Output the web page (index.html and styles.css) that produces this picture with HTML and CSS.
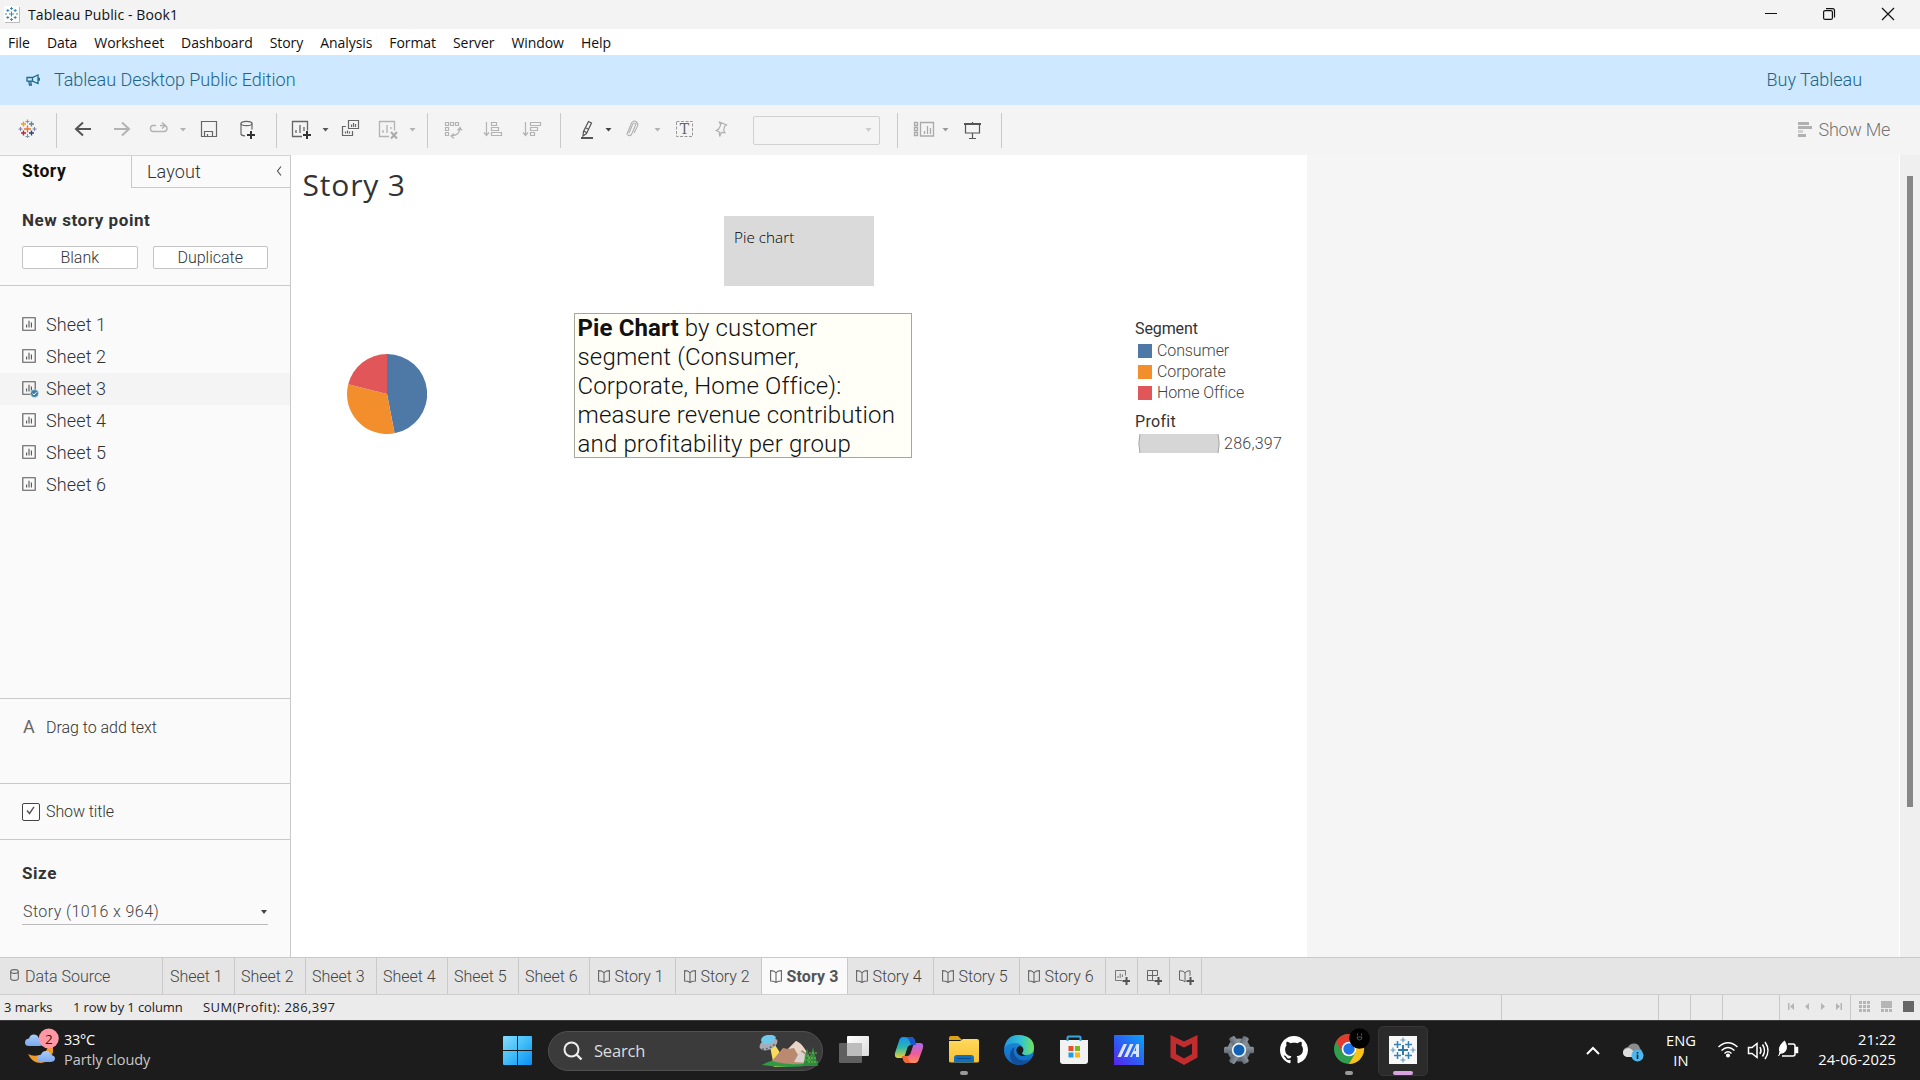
FILE: index.html
```html
<!DOCTYPE html>
<html lang="en">
<head>
<meta charset="utf-8">
<title>Tableau Public - Book1</title>
<link rel="stylesheet" href="styles.css">
</head>
<body>
<svg class="defs" aria-hidden="true">
  <defs>
    <symbol id="sheet" viewBox="0 0 14 14"><path d="M.8.8h12.4v12.4H.8z" fill="none" stroke="#555" stroke-width="1.1"/><path d="M4.6 10.6V7.4M7 10.6V3.8M9.4 10.6V5.4" stroke="#555" fill="none" stroke-width="1.1"/></symbol>
    <symbol id="book" viewBox="0 0 12 13"><path d="M.6.6 3.6 1 6 2.600 8.400 1 11.400.6V11l-3 .2L6 12.500 3.600 11.200.6 11zM6 2.600v9.900" fill="none" stroke="#666" stroke-width="1.1"/></symbol>
    <symbol id="caret" viewBox="0 0 6 4"><path d="M0 0h6L3 4z" fill="currentColor"/></symbol>
    <linearGradient id="win" x1="0" y1="0" x2="1" y2="1"><stop offset="0" stop-color="#86dcff"/><stop offset=".5" stop-color="#40bdf8"/><stop offset="1" stop-color="#0a8ef5"/></linearGradient>
    <linearGradient id="glass" x1="0" y1="0" x2="1" y2="1"><stop offset="0" stop-color="#fff"/><stop offset="1" stop-color="#dcdcdc"/></linearGradient>
    <linearGradient id="copA" x1="0" y1="0" x2="0" y2="1"><stop offset="0" stop-color="#1793ee"/><stop offset=".5" stop-color="#2db7b0"/><stop offset="1" stop-color="#e9d22c"/></linearGradient>
    <linearGradient id="copB" x1="0" y1="0" x2="0" y2="1"><stop offset="0" stop-color="#a96bf0"/><stop offset=".55" stop-color="#ef5d9a"/><stop offset="1" stop-color="#fd9052"/></linearGradient>
    <linearGradient id="folder" x1="0" y1="0" x2="0" y2="1"><stop offset="0" stop-color="#ffd95e"/><stop offset="1" stop-color="#f9bf2f"/></linearGradient>
    <linearGradient id="edgeA" x1="0" y1="0" x2="1" y2="0"><stop offset="0" stop-color="#2196df"/><stop offset=".55" stop-color="#32c3d4"/><stop offset="1" stop-color="#72e35b"/></linearGradient>
    <linearGradient id="edgeB" x1="0" y1="0" x2="0" y2="1"><stop offset="0" stop-color="#1b8fe0"/><stop offset="1" stop-color="#1168c0"/></linearGradient>
    <linearGradient id="asus" x1="0" y1="1" x2="1" y2="0"><stop offset="0" stop-color="#5a22ee"/><stop offset=".5" stop-color="#2b62f4"/><stop offset="1" stop-color="#0aa4f8"/></linearGradient>
    <linearGradient id="gear" x1="0" y1="0" x2="0" y2="1"><stop offset="0" stop-color="#8b949c"/><stop offset="1" stop-color="#626c75"/></linearGradient>
    <linearGradient id="cloud" x1="0" y1="0" x2="0" y2="1"><stop offset="0" stop-color="#a9cdfb"/><stop offset="1" stop-color="#7ba8ee"/></linearGradient>
  </defs>
</svg>

<header class="titlebar">
  <svg class="appicon" width="16" height="17" viewBox="0 0 16 17"><path d="M0 0h15v16H0z" fill="#fdfdfd"/><path d="M15.500 1v15.500H1" stroke="#bbb" fill="none"/><path d="M7.500 5.500v5M5 8h5M7.500 1v3M6 2.500h3M7.500 12v3M6 13.500h3M3.800 3v3M2.300 4.500h3M11.200 3v3M9.700 4.500h3M3.800 10v3M2.300 11.500h3M11.200 10v3M9.700 11.500h3M1 8h2M12 8h2" stroke="#4388b4" fill="none"/></svg>
  <span>Tableau Public - Book1</span>
  <svg class="winctl" width="160" height="29" viewBox="1760 0 160 29" fill="none" stroke="#111" stroke-width="1.2"><path d="M1765 13.500h12M1882 8l12 12M1894 8l-12 12"/><rect x="1823.600" y="10.600" width="8.800" height="8.800" rx="1.500"/><path d="M1826 8.600h6.500q2 0 2 2v6.800"/></svg>
</header>

<nav class="menubar"><span>File</span><span>Data</span><span>Worksheet</span><span>Dashboard</span><span>Story</span><span>Analysis</span><span>Format</span><span>Server</span><span>Window</span><span>Help</span></nav>

<div class="banner">
  <svg width="14" height="14" viewBox="0 0 14 14" fill="none" stroke="#1f6a8c" stroke-width="1.300"><path d="M1 4.500h5.500L12 2v8.500L6.500 8.200H1zM6.500 4.500v3.700M2.800 8.200l.7 3.800h1.800l-.6-3.800M13.300 4.800v3"/></svg>
  <span>Tableau Desktop Public Edition</span>
  <a class="buy">Buy Tableau</a>
</div>

<div class="toolbar">
  <div class="group"><svg width="56" height="50" viewBox="0 105 56 50" fill="none" stroke-width="1.400"><path d="M27.500 125.500v7M24 129h7" stroke="#e8762c"/><path d="M27.500 119.500v4M25.500 121.500h4M27.500 134v4M25.500 136.500h4" stroke="#7d94aa" stroke-width="1.100"/><path d="M23.500 121.500v5M21 124h5" stroke="#eb9a3c"/><path d="M31.500 121.500v5M29 124h5" stroke="#59879b"/><path d="M23.500 130.500v5M21 133h5" stroke="#b5283b"/><path d="M31.500 130.500v5M29 133h5" stroke="#28477c"/><path d="M20.500 127v4M18.500 129h4M34.500 127v4M32.500 129h4" stroke="#7c80a8" stroke-width="1.100"/></svg></div>
  <div class="group"><svg width="219" height="50" viewBox="57 105 219 50" fill="none"><path d="M91 129H76M83 122.500 76 129l7 6.500" stroke="#555" stroke-width="2"/><path d="M114 129h15M122 122.500l7 6.500-7 6.500" stroke="#b3b3b3" stroke-width="2"/><path d="M156 125.500h-3q-2.500 0-2.500 3t2.500 3h11q3 0 3-3t-3-3h-4M162 122.500l3.500 3-3.500 3" stroke="#b3b3b3" stroke-width="1.400"/><path d="M180 128h6l-3 3.500z" fill="#b3b3b3"/><path d="M201.500 121.500h15v15h-15zM204.500 136v-4.500h8v4.500M207.500 136v-2" stroke="#666" stroke-width="1.200"/><ellipse cx="246.500" cy="123.500" rx="5.500" ry="2.200" stroke="#666" stroke-width="1.200"/><path d="M241 123.500V134q.5 1.700 4 1.900M252 123.500v6" stroke="#666" stroke-width="1.200"/><path d="M251 131v8M247 135h8" stroke="#333" stroke-width="2"/></svg></div>
  <div class="group"><svg width="150" height="50" viewBox="277 105 150 50" fill="none"><path d="M302 136.500h-9.500v-15h15v9M296 133v-3M300 133v-8M304 131v-4" stroke="#666" stroke-width="1.300"/><path d="M307 131v8M303 135h8" stroke="#333" stroke-width="2"/><path d="M322.500 128h6l-3 3.500z" fill="#555"/><path d="M348.500 120.500h10v8h-10zM346 126.500h-3.500v9h10v-4.500M351.500 127v-2.500M353.500 127v-4M355.500 127v-3M345.500 133.500v-2M347.500 133.500v-3M349.500 133.500v-2" stroke="#666" stroke-width="1.200"/><path d="M389 136.500h-9.500v-15h15v9M383 133v-3M387 133v-8M391 129v-2" stroke="#b3b3b3" stroke-width="1.300"/><path d="M391 132l6 6.500M397 132l-6 6.500" stroke="#aaa" stroke-width="2"/><path d="M409.500 128h6l-3 3.500z" fill="#b3b3b3"/></svg></div>
  <div class="group"><svg width="132" height="50" viewBox="428 105 132 50" fill="none" stroke="#b3b3b3" stroke-width="1.200"><path d="M445.500 122.500h3v3h-3zM450.500 122.500h3v3h-3zM455.500 122.500h3v3h-3zM445.500 127.500h3v3h-3zM445.500 132.500h3v3h-3zM460 128q0 7-8.500 8M457.500 130.500 460 127.500l2 3M454 133.500l-3 2.500 3 2.500"/><path d="M486.500 122v13M484 132.500l2.500 3 2.500-3M491.500 122.500h5v3h-5zM491.500 127.500h7v3h-7zM491.500 132.500h10v3h-10z"/><path d="M525.500 122v13M523 132.500l2.500 3 2.500-3M530.500 122.500h10v3h-10zM530.500 127.500h7v3h-7zM530.500 132.500h4v3h-4z"/></svg></div>
  <div class="group"><svg width="192" height="50" viewBox="561 105 192 50" fill="none"><path d="M588.500 121.500l3 1.500-5 10.500-3.500 2.500.5-4.500zM584 131l3 2M586 128l3 1.500" stroke="#555" stroke-width="1.200"/><path d="M581 138h12" stroke="#555" stroke-width="2"/><path d="M605.500 128h6l-3 3.500z" fill="#444"/><path d="M629 133l3.800-9q1.700-2 3.200 0l-4.500 10.500q-2.500 2.500-4.500-.5l4.500-11q2.500-3.500 5-1t.5 5l-3 6" stroke="#b0b0b0" stroke-width="1.100"/><path d="M654.500 128h6l-3 3.500z" fill="#b3b3b3"/><rect x="676.500" y="121.500" width="16" height="15" stroke="#999" stroke-dasharray="3 1.500"/><text x="684.500" y="134" text-anchor="middle" class="tee">T</text><path d="M719.500 122l7 3-2 1.500-.8 4 1.200 2.300-3.700-.3-1.500 4-.5-4.500-3-1.500 2.500-1.500 2-4z" stroke="#b0b0b0" stroke-width="1.200"/></svg><div class="select"><svg width="7" height="4"><use href="#caret"/></svg></div></div>
  <div class="group"><svg width="103" height="50" viewBox="898 105 103 50" fill="none"><path d="M914.500 122.500h3v3h-3zM914.500 127.500h3v3h-3zM914.500 132.500h3v3h-3zM920.500 122.500h13v13.500h-13zM924.500 134v-3M927.500 134v-8M930.500 134v-6" stroke="#aaa" stroke-width="1.300"/><path d="M942.500 128h6l-3 3.500z" fill="#999"/><path d="M964 124h17" stroke="#555" stroke-width="2"/><path d="M965.500 124.500v8.500h14v-8.500M972.500 133v6M969 138.500h7M972.500 122v2" stroke="#555" stroke-width="1.200"/></svg></div>
  <div class="showme"><svg width="14" height="15" fill="#b0b0b0"><path d="M0 0h11v3H0zM0 4h14v3H0zM0 12h8v3H0z"/><path d="M0 8h5v3H0z" fill="#d2d2d2"/></svg><span>Show Me</span></div>
</div>

<main class="workspace">
  <aside class="sidebar">
    <div class="sidetabs"><div class="on">Story</div><div class="off">Layout<svg width="6" height="10" viewBox="0 0 6 10"><path d="M5 .5 1.500 5 5 9.500" fill="none" stroke="#555" stroke-width="1.200"/></svg></div></div>
    <section class="newpoint"><h2>New story point</h2><div class="btns"><button>Blank</button><button>Duplicate</button></div></section>
    <ul class="sheets">
      <li><svg width="14" height="14"><use href="#sheet"/></svg>Sheet 1</li>
      <li><svg width="14" height="14"><use href="#sheet"/></svg>Sheet 2</li>
      <li class="used"><svg width="14" height="14"><use href="#sheet"/><circle cx="12.500" cy="12.500" r="4" fill="#3d7ea6" stroke="#f4f4f4" stroke-width=".6"/><path d="M10.500 12.500l1.500 1.500 2.500-2.800" stroke="#fff" fill="none"/></svg>Sheet 3</li>
      <li><svg width="14" height="14"><use href="#sheet"/></svg>Sheet 4</li>
      <li><svg width="14" height="14"><use href="#sheet"/></svg>Sheet 5</li>
      <li><svg width="14" height="14"><use href="#sheet"/></svg>Sheet 6</li>
    </ul>
    <section class="dragtext"><b>A</b><span>Drag to add text</span></section>
    <section class="showtitle"><i class="check"><svg width="9" height="9" viewBox="0 0 9 9"><path d="M1 4.500 3.500 7.500 8 .8" fill="none" stroke="#555" stroke-width="1.400"/></svg></i><span>Show title</span></section>
    <section class="size"><h2>Size</h2><div class="sizesel"><span>Story (1016 x 964)</span><svg width="6" height="4"><use href="#caret"/></svg></div></section>
  </aside>

  <div class="canvas">
    <h1>Story 3</h1>
    <div class="point">Pie chart</div>
    <div class="viz">
      <svg class="pie" width="80" height="80" viewBox="-40 -40 80 80"><path d="M0 0V-40A40 40 0 0 1 7.600 39.300Z" fill="#4e79a7"/><path d="M0 0 7.600 39.300A40 40 0 0 1 -38.800 -9.700Z" fill="#f28e2b"/><path d="M0 0 -38.800 -9.700A40 40 0 0 1 0 -40Z" fill="#e15759"/></svg>
      <p class="note"><b>Pie Chart</b> by customer<br>segment (Consumer,<br>Corporate, Home Office):<br>measure revenue contribution<br>and profitability per group</p>
      <div class="legend">
        <h3>Segment</h3>
        <div class="key"><i class="blue"></i>Consumer</div>
        <div class="key"><i class="orange"></i>Corporate</div>
        <div class="key"><i class="red"></i>Home Office</div>
        <h3 class="profit">Profit</h3>
        <div class="sizekey"><svg width="82" height="19" viewBox="0 0 82 19"><path d="M2 0h78q2 9.500 0 19H2q-2-9.500 0-19z" fill="#d6d6d6"/><path d="M2 0q-2.400 9.500 0 19M80 0q2.400 9.500 0 19" fill="none" stroke="#a4a4a4"/></svg><span>286,397</span></div>
      </div>
    </div>
  </div>
  <div class="scroll"><div class="thumb"></div></div>
</main>

<div class="tabs">
  <div class="tab source"><svg width="9" height="12" viewBox="0 0 9 12" fill="none" stroke="#666" stroke-width="1.100"><ellipse cx="4.500" cy="2.500" rx="3.800" ry="1.900"/><path d="M.7 2.500v7q0 1.900 3.800 1.900t3.800-1.900v-7"/></svg><span>Data Source</span></div>
  <div class="tab first">Sheet 1</div><div class="tab">Sheet 2</div><div class="tab">Sheet 3</div><div class="tab">Sheet 4</div><div class="tab">Sheet 5</div><div class="tab">Sheet 6</div>
  <div class="tab story"><svg width="12" height="13"><use href="#book"/></svg>Story 1</div>
  <div class="tab story"><svg width="12" height="13"><use href="#book"/></svg>Story 2</div>
  <div class="tab story current"><svg width="12" height="13"><use href="#book"/></svg>Story 3</div>
  <div class="tab story"><svg width="12" height="13"><use href="#book"/></svg>Story 4</div>
  <div class="tab story"><svg width="12" height="13"><use href="#book"/></svg>Story 5</div>
  <div class="tab story"><svg width="12" height="13"><use href="#book"/></svg>Story 6</div>
  <div class="tab add"><svg width="15" height="15" viewBox="0 0 15 15" fill="none"><path d="M7 10.500H.5V.5h10v5M3 8V6M5.200 8V3.500M7.400 7V4.500" stroke="#777"/><path d="M11.500 7v8M7.500 11h8" stroke="#555" stroke-width="2"/></svg></div>
  <div class="tab add"><svg width="15" height="15" viewBox="0 0 15 15" fill="none"><path d="M7 10.500H.5V.5h10v5M.5 5.500h10M5.500.5v10" stroke="#666"/><path d="M11.500 7v8M7.500 11h8" stroke="#555" stroke-width="2"/></svg></div>
  <div class="tab add"><svg width="15" height="15" viewBox="0 0 15 15" fill="none"><path d="M6 12 4 10.500.5 10V.8l3.500.4L6 2.800 8 1.200 11 .8v5M6 2.800V12" stroke="#666"/><path d="M11.500 7v8M7.500 11h8" stroke="#555" stroke-width="2"/></svg></div>
</div>

<div class="status">
  <span class="marks">3 marks</span><span class="rows">1 row by 1 column</span><span class="sum">SUM(Profit): 286,397</span>
  <svg width="419" height="25" viewBox="1501 995 419 25"><path d="M1501.500 995v25M1658.500 995v25M1690.500 995v25M1722.500 995v25M1779.500 995v25M1850.500 995v25" stroke="#c9c9c9"/><g fill="#b5b5b5"><path d="M1788 1003h1.500v7H1788zM1794 1003v7l-4-3.500zM1809 1003v7l-4-3.500zM1821 1003v7l4-3.500zM1836 1003v7l4-3.500zM1840.500 1003h1.500v7h-1.500z"/><path d="M1859 1001h3v3h-3zM1863 1001h3v3h-3zM1867 1001h3v3h-3zM1859 1005h3v3h-3zM1863 1005h3v3h-3zM1867 1005h3v3h-3zM1859 1009h3v3h-3zM1863 1009h3v3h-3zM1867 1009h3v3h-3zM1881 1001h11v7h-11zM1881 1009h3v3h-3zM1885 1009h3v3h-3zM1889 1009h3v3h-3z"/></g><path d="M1903 1001h11v11h-11z" fill="#666"/></svg>
</div>

<footer class="taskbar">
  <div class="weather">
    <svg width="36" height="36" viewBox="24 1027 36 36"><path d="M28 1053q5 3 12 1 8-3 9-12 5 3 4 9-2 10-12 11-9 0-13-9z" fill="#f09a25"/><path d="M29 1045q-4 0-4-3.500t4-4q1-4 5-4 3.500 0 5 4 4 .5 4 4t-4 3.500z" fill="url(#cloud)"/><path d="M41 1061q-4 0-4-3.500t4-3.500q1-4 5-4t5 4q4 .5 4 3.500t-4 3.500z" fill="url(#cloud)"/><circle cx="48.800" cy="1037.500" r="10" fill="#ff98a3"/><text x="48.800" y="1042.500" text-anchor="middle" class="badge">2</text></svg>
    <div class="wtext"><div class="temp">33°C</div><div class="cond">Partly cloudy</div></div>
  </div>
  <div class="apps">
    <svg class="start" width="29" height="29" viewBox="0 0 29 29" fill="url(#win)"><path d="M0 1q0-1 1-1h13v14H0zM15 0h13q1 0 1 1v13H15zM0 15h14v14H1q-1 0-1-1zM15 15h14v13q0 1-1 1H15z"/></svg>
    <div class="search">
      <svg width="20" height="20" viewBox="0 0 20 20" fill="none" stroke="#eee"><circle cx="8.500" cy="8.500" r="7" stroke-width="2"/><path d="M13.500 13.500l5 5" stroke-width="2.400"/></svg><span>Search</span>
      <svg class="ufo" width="60" height="32" viewBox="758 1035 60 32"><path d="M770 1046l4 21h12l-7-16-4-6z" fill="#f5dc5f"/><path d="M762 1065q12-8 32-4 12-3 18 4-24 4-50 0z" fill="#2f9b45"/><path d="M772 1061l11-13 5 1 8-8q5 2 8 7l9 14q-18 5-41-1z" fill="#b98970"/><path d="M788 1049l8-8q5 2 8 7l5 7-7-5-4 5-4-7z" fill="#e9d6cb"/><path d="M794 1062l6-11 6 4 3 8z" fill="#d8d2d2"/><path d="M807 1048l-4 18h8zM813 1047l-5 19h10z" fill="#2f8b3d"/><path d="M804 1056h7M804 1060h7M809 1053h8M808 1058h9M808 1062h10" stroke="#77bd4f" stroke-dasharray="2 1"/><ellipse cx="768.500" cy="1044" rx="9.500" ry="5.500" transform="rotate(-25 768.500 1044)" fill="#a9abb5"/><path d="M761 1041q0-5 6-6t9 2l-3 5q-6 3-9 2z" fill="#6ec9ea"/><path d="M762 1049q7 1 14-6" fill="none" stroke="#62636e" stroke-width="1.500" stroke-dasharray="2 2"/></svg>
    </div>
    <div class="app"><svg width="32" height="30" viewBox="0 0 32 30"><rect x="9" y="1" width="22" height="20" rx="1" fill="url(#glass)"/><rect x="1" y="8" width="23" height="20" rx="1" fill="#777" fill-opacity=".75"/><path d="M9 8h15v13H9z" fill="#bdbdbd"/></svg></div>
    <div class="app"><svg width="30" height="30" viewBox="0 0 30 30"><path d="M9 2h8q3 0 4 4l1 4h-5q-3 0-4 4l-2 6q-1 3-4 3H4q-4 0-3-5L5 6q1-4 4-4z" fill="url(#copA)"/><path d="M21 28h-8q-3 0-4-4l-1-3h5q3 0 4-4l2-6q1-3 4-3h3q4 0 3 5l-4 11q-1 4-4 4z" fill="url(#copB)"/><path d="M9 2h8q3 0 4 4l1 4h-5l-2-5q-1-3-6-3z" fill="#1d56c9"/><path d="M13 28q-3 0-4-4l-1-3h5l2 5q1 2 6 2z" fill="#f1672d"/></svg></div>
    <div class="app run"><svg width="30" height="30" viewBox="0 0 30 30"><path d="M0 3q0-2 2-2h7l4 4H0z" fill="#dca117"/><path d="M0 6h11l3-2h14q2 0 2 2v20q0 1.500-2 1.500H2Q0 27.500 0 26z" fill="url(#folder)"/><path d="M5 27.500V23q0-3 3-3h14q3 0 3 3v4.500z" fill="#1170bd"/><path d="M8 23.500h14" stroke="#0b4a89"/></svg></div>
    <div class="app"><svg width="30" height="30" viewBox="0 0 30 30"><circle cx="15" cy="15" r="15" fill="url(#edgeB)"/><path d="M.5 13Q2 0 15 0q15 1 15 13 0 7-8 7-4 0-4-2 2-2 1-5-2-5-8-5-7 0-10.500 5z" fill="url(#edgeA)"/><path d="M11 12q-3 5 1 10 5 6 15 2-4 6-12 6-9-1-9-9 0-7 5-9z" fill="#124f9b"/><path d="M19 13q1 3-1 5 0 2 4 2-3 2-7 0-4-3-2-7 3-4 6 0z" fill="#1b1b1b"/></svg></div>
    <div class="app"><svg width="30" height="30" viewBox="0 0 30 30"><path d="M1 5h28v21q0 3-3 3H4q-3 0-3-3z" fill="#f2f2f2"/><path d="M8.500 6V2.500q0-1 1-1h11q1 0 1 1V6" fill="none" stroke="#35a7dc" stroke-width="2"/><path d="M9.500 11h5v5h-5z" fill="#e8502a"/><path d="M16 11h5v5h-5z" fill="#7eb71a"/><path d="M9.500 17.500h5v5h-5z" fill="#1ba0e8"/><path d="M16 17.500h5v5h-5z" fill="#fbb516"/></svg></div>
    <div class="app"><svg width="30" height="30" viewBox="0 0 30 30"><path d="M0 0h30v30H0z" fill="url(#asus)"/><path d="M3.500 22 9.500 9H13L7 22zM10 22l6-13h3.500l-6 13zM16 22l6.500-13H25v13h-3v-3h-3l-1 3zM20.500 16H22v-4z" fill="#d7e6ff"/></svg></div>
    <div class="app"><svg width="28" height="30" viewBox="0 0 28 30"><path d="M.5 0 14 6.500 27.500 0v22.500L14 30 .5 22.500z" fill="#c22c2f"/><path d="M6 8.500l8 4 8-4v10.500l-8 4.500-8-4.500z" fill="#1c1c1c"/></svg></div>
    <div class="app"><svg width="30" height="30" viewBox="0 0 30 30"><g fill="url(#gear)"><circle cx="15" cy="15" r="11.500"/><rect x="0" y="11.800" width="30" height="6.400" rx="1.500"/><rect x="0" y="11.800" width="30" height="6.400" rx="1.500" transform="rotate(60 15 15)"/><rect x="0" y="11.800" width="30" height="6.400" rx="1.500" transform="rotate(120 15 15)"/></g><circle cx="15" cy="15" r="7.200" fill="#edf2f6"/><circle cx="15" cy="15" r="5.500" fill="#0e62b4"/></svg></div>
    <div class="app"><svg width="28" height="28" viewBox="0 0 16 16" fill="#fff"><path d="M8 0C3.580 0 0 3.580 0 8c0 3.540 2.290 6.530 5.470 7.590.4.070.55-.17.55-.38 0-.19-.01-.82-.01-1.490-2.010.37-2.530-.49-2.690-.94-.09-.23-.48-.94-.82-1.130-.28-.15-.68-.52-.01-.53.63-.01 1.080.58 1.230.82.72 1.210 1.870.87 2.330.66.07-.52.28-.87.51-1.070-1.780-.2-3.640-.89-3.640-3.950 0-.87.31-1.590.82-2.150-.08-.2-.36-1.020.08-2.120 0 0 .67-.21 2.200.82.64-.18 1.320-.27 2-.27s1.360.09 2 .27c1.530-1.040 2.200-.82 2.200-.82.44 1.100.16 1.920.08 2.120.51.56.82 1.270.82 2.150 0 3.070-1.870 3.750-3.650 3.950.29.25.54.73.54 1.480 0 1.070-.01 1.930-.01 2.200 0 .21.15.46.55.38A8.010 8.010 0 0 0 16 8c0-4.420-3.580-8-8-8z"/></svg></div>
    <div class="app run"><svg class="chrome" width="38" height="38" viewBox="-15 -21 38 38"><circle r="15" fill="#2f9e4f"/><path d="M-13 -7.500A15 15 0 0 1 13 -7.500H0L-6.500 3.700z" fill="#e33b2e"/><path d="M0 -7.500H13A15 15 0 0 1 0 15L6.500 3.700z" fill="#fbc116"/><circle r="7.300" fill="#fff"/><circle r="5.700" fill="#1f73e8"/><circle cx="10.500" cy="-10.500" r="10.300" fill="#000"/><path d="M8.500-15.500v2M12.500-15.500v2M8-12q0 3 2.500 3t2.500-3z" stroke="#555" fill="none"/></svg></div>
    <div class="app active"><svg width="28" height="28" viewBox="0 0 28 28"><path d="M0 0h28v28H0z" fill="#f8f8f8"/><path d="M14 9v10M9 14h10" stroke="#2d78ac" stroke-width="2"/><path d="M8.500 5v7M5 8.500h7M19.500 5v7M16 8.500h7M8.500 16v7M5 19.500h7M19.500 16v7M16 19.500h7" stroke="#3783b5" stroke-width="1.500"/><path d="M14 1.500v5M11.500 4h5M14 21.500v5M11.500 24h5M4 11.500v5M1.500 14h5M24 11.500v5M21.500 14h5" stroke="#5d9bc4" stroke-width="1.100"/></svg></div>
  </div>
  <div class="tray">
    <svg width="64" height="40" viewBox="1584 1030 64 40"><path d="M1587 1053l6-6 6 6" fill="none" stroke="#fff" stroke-width="2"/><path d="M1627 1056q-4-1-4-5t5-5q2-4 7-3.500 4 .5 5 5 2 1 2 4t-4 4.500z" fill="#8c8c8c"/><path d="M1627 1056q-4-1-4-4.500t5-4.500q3 0 6 4l4 5z" fill="#ddd"/><circle cx="1637.500" cy="1054.500" r="6" fill="#4cb8f0"/><path d="M1637.500 1051v1.500M1637.500 1053.500v4.500" stroke="#123" stroke-width="1.600"/></svg>
    <div class="lang">ENG<br>IN</div>
    <svg width="84" height="40" viewBox="1716 1031 84 40" fill="none" stroke="#fff" stroke-width="1.500"><path d="M1718.500 1047q9.500-8.500 19 0M1721.500 1050.500q6.500-6 13 0M1724.500 1053.500q3.500-3.500 7 0"/><circle cx="1728" cy="1055.500" r="1.300" fill="#fff"/><path d="M1748.500 1047.500h3.500l5-4v14l-5-4h-3.500zM1760 1047q2 3.500 0 7M1762.500 1044.500q4 6 0 12M1765 1042q6 8.500 0 17"/><path d="M1788 1044h5q2 0 2 2v8q0 2-2 2h-11"/><path d="M1795.500 1047.500h2v5h-2z" fill="#fff"/><path d="M1779.500 1051q-1-5 5-10 4 7 0 11-2 1.500-4 1l-2 3" fill="#fff" stroke-width="1"/></svg>
    <div class="clock">21:22<br>24-06-2025</div>
  </div>
</footer>
</body>
</html>
```
FILE: styles.css
```css
* { box-sizing: border-box; margin: 0; padding: 0; }
body {
  width: 1920px; height: 1080px; overflow: hidden;
  display: flex; flex-direction: column;
  font-family: Roboto, "Liberation Sans", sans-serif;
  font-weight: 300; font-size: 16px; color: #333; background: #f5f5f5;
}
svg { display: block; flex: none; }
.defs { width: 0; height: 0; position: absolute; }

.titlebar {
  height: 29px; background: #f3f3f3; display: flex; align-items: center;
  padding-left: 4px; gap: 8px; color: #111;
  font: 400 14px "Open Sans", sans-serif; letter-spacing: .1px;
}
.winctl { margin-left: auto; }
.menubar {
  height: 26px; background: #fff; display: flex; align-items: center;
  padding: 1px 8px 0; gap: 17px; color: #111;
  font: 400 14px "Open Sans", sans-serif; letter-spacing: -.07px;
}
.banner {
  height: 50px; background: #cde8ff; display: flex; align-items: center;
  padding: 0 58px 0 26px; gap: 14px; color: #1c6586; font-size: 18px; letter-spacing: -.03px;
}
.banner span, .banner a { margin-top: -2px; }
.banner .buy { margin-left: auto; }

.toolbar { height: 50px; background: #f4f4f4; display: flex; }
.group { display: flex; align-items: center; }
.group::after { content: ""; width: 1px; height: 35px; background: #c9c9c9; }
.tee { font: 400 14px "DejaVu Serif", serif; fill: #666; }
.select {
  width: 127px; height: 29px; margin-right: 17px; border: 1px solid #d0d0d0; border-radius: 2px;
  display: flex; align-items: center; justify-content: flex-end; padding-right: 7px; color: #ccc;
}
.showme {
  margin-left: auto; padding: 0 30px 2px 0; display: flex; align-items: center;
  gap: 7px; font-size: 18px; color: #757575; letter-spacing: -.3px;
}

.workspace { height: 802px; display: flex; }
.sidebar {
  width: 291px; background: #fafafa; border-right: 1px solid #c9c9c9; border-top: 1px solid #d4d4d4;
  display: flex; flex-direction: column;
}
.sidetabs { display: flex; height: 32px; font-size: 18px; }
.sidetabs .on { width: 131px; padding: 4px 0 0 22px; font-weight: 700; font-size: 17.500px; line-height: 22px; color: #111; letter-spacing: .5px; }
.sidetabs .off {
  flex: 1; display: flex; align-items: center; justify-content: space-between; letter-spacing: .1px;
  padding: 0 8px 1px 15px; border-left: 1px solid #c9c9c9; border-bottom: 1px solid #c9c9c9;
}
.sidebar h2 { font-size: 17px; line-height: 22px; font-weight: 700; color: #333; letter-spacing: .57px; }
.newpoint { height: 98px; padding: 21px 22px 0; border-bottom: 1px solid #c9c9c9; }
.btns { display: flex; gap: 15px; margin-top: 15px; }
.btns button {
  flex: 1; height: 23px; background: #fff; border: 1px solid #c4c4c4; border-radius: 2px;
  font: 300 16px Roboto, sans-serif; color: #333; line-height: 21px;
}
.sheets { list-style: none; padding-top: 23px; height: 412px; }
.sheets li { height: 32px; display: flex; align-items: center; gap: 10px; padding: 0 0 2px 22px; font-size: 18px; letter-spacing: .12px; }
.sheets li svg { overflow: visible; }
.sheets .used { background: #f4f4f4; }
.dragtext { border-top: 1px solid #c9c9c9; height: 85px; display: flex; padding: 19px 0 0 23px; line-height: 20px; gap: 12px; letter-spacing: -.03px; }
.dragtext b { font-size: 18px; font-weight: 400; color: #666; width: 11px; line-height: 18px; }
.showtitle { border-top: 1px solid #c9c9c9; height: 56px; display: flex; align-items: center; padding-left: 22px; gap: 6px; letter-spacing: -.1px; }
.check { width: 18px; height: 18px; border: 1px solid #444; border-radius: 2px; background: #fff; display: flex; align-items: center; justify-content: center; padding: 0 2px 2px 0; }
.size { border-top: 1px solid #c9c9c9; flex: 1; padding: 22px 22px 0; }
.sizesel { margin-top: 15px; height: 26px; border-bottom: 1px solid #bbb; display: flex; align-items: center; justify-content: space-between; padding: 0 1px; letter-spacing: .42px; color: #444; }

.canvas { width: 1016px; background: #fff; }
.canvas h1 { font: 400 30px/40px "Open Sans", sans-serif; color: #333; padding: 10px 0 0 11.500px; letter-spacing: .85px; }
.point {
  width: 150px; height: 70px; margin: 11px auto 0; background: #dadada; color: #000;
  font: 300 15.300px/22px "Open Sans", sans-serif; padding: 10px 10px;
}
.viz { display: flex; padding: 27px 0 0 56px; }
.pie { margin-top: 41px; }
.note {
  width: 338px; height: 145px; margin-left: 147px; border: 1px solid #a9a69c; background: #fffff8;
  padding: 0 2.500px; font-size: 24px; line-height: 28.900px; color: #111; letter-spacing: .16px; white-space: nowrap;
}
.note b { font-weight: 700; letter-spacing: .1px; }
.legend { margin-left: 223px; padding-top: 5px; }
.legend h3 { font-size: 16px; font-weight: 400; line-height: 22px; color: #333; letter-spacing: -.1px; }
.legend .key { height: 21px; display: flex; align-items: center; gap: 5px; padding-left: 3px; color: #444; letter-spacing: -.1px; }
.legend .key i { width: 14px; height: 14px; }
.blue { background: #4e79a7; } .orange { background: #f28e2b; } .red { background: #e15759; }
.legend .profit { margin-top: 8px; letter-spacing: .3px; }
.sizekey { display: flex; align-items: center; gap: 4px; padding-left: 3px; height: 21px; letter-spacing: .25px; color: #444; }

.scroll { margin-left: auto; width: 21px; background: #efefef; border-left: 1px solid #fff; padding: 21px 0 0 7px; }
.thumb { width: 6px; height: 631px; background: #868686; }

.tabs { height: 38px; background: #e5e5e5; border-top: 1px solid #c9c9c9; border-bottom: 1px solid #cfcfcf; display: flex; }
.tab { width: 71px; border-right: 1px solid #c9c9c9; display: flex; align-items: center; padding: 1px 0 0 6px; color: #444; letter-spacing: -.03px; }
.tab.first { width: 72px; padding-left: 7px; }
.tab.source { width: 163px; padding-left: 10px; gap: 6px; }
.source svg { margin-top: -3px; }
.tab.story { width: 86px; padding-left: 8px; gap: 4.500px; }
.story svg { margin-top: -1px; }
.tab.current { background: #fafafa; font-weight: 700; color: #555; letter-spacing: .1px; padding-top: 0; }
.current svg { margin-top: 0; }
.tab.add { width: 32px; padding: 2px 0 0 9px; }

.status { height: 25px; background: #ebebeb; display: flex; align-items: center; font: 400 13px "Open Sans", sans-serif; color: #222; }
.status span { padding-bottom: 2px; }
.status svg { margin-left: auto; }
.marks { width: 69px; margin-left: 4px; }
.rows { width: 130px; letter-spacing: -.1px; }
.sum { letter-spacing: .42px; }

.taskbar { height: 60px; background: #1c1c1c; border-top: 1px solid #3a3a3a; display: flex; align-items: center; color: #fff; font: 400 15px/20px "Open Sans", sans-serif; }
.weather { width: 503px; padding: 0 0 0 24px; display: flex; gap: 4px; align-items: center; font-size: 14.500px; letter-spacing: -.05px; }
.weather svg { margin-top: -9px; }
.wtext { margin-top: -2px; }
.temp { color: #fff; letter-spacing: -.3px; } .cond { color: #c8c8c8; }
.badge { font: 400 13.500px "Open Sans", sans-serif; fill: #222; }
.apps { display: flex; align-items: center; }
.start { margin-right: 16px; }
.search {
  width: 275px; height: 40px; border-radius: 20px; background: #3b3b3b; border: 1px solid #505050;
  display: flex; align-items: center; padding: 0 4px 0 14px; font-size: 16.500px; color: #ddd; margin-right: 3px;
}
.search span { margin-left: 11px; letter-spacing: -.2px; }
.ufo { margin-left: auto; }
.app { width: 55px; height: 59px; display: flex; align-items: center; justify-content: center; position: relative; }
.app svg { margin-bottom: 1px; }
.app.run::after, .app.active::after { content: ""; position: absolute; bottom: 5px; width: 8px; height: 4px; border-radius: 2px; background: #9a9a9a; }
.app.active { height: 50px; width: 50px; margin-left: 2px; border-radius: 5px; background: #2b2b2b; border: 1px solid #353535; }
.app.active::after { width: 20px; background: #d9a3e2; bottom: 0; }
.app .chrome { margin: -7px -8px 0 0; }
.tray { margin-left: auto; display: flex; align-items: center; padding-right: 24px; font-size: 14.700px; letter-spacing: .1px; }
.lang { text-align: center; width: 66px; margin: -2px 2px 0 0; }
.clock { text-align: right; width: 96px; margin-top: -4px; }
```
